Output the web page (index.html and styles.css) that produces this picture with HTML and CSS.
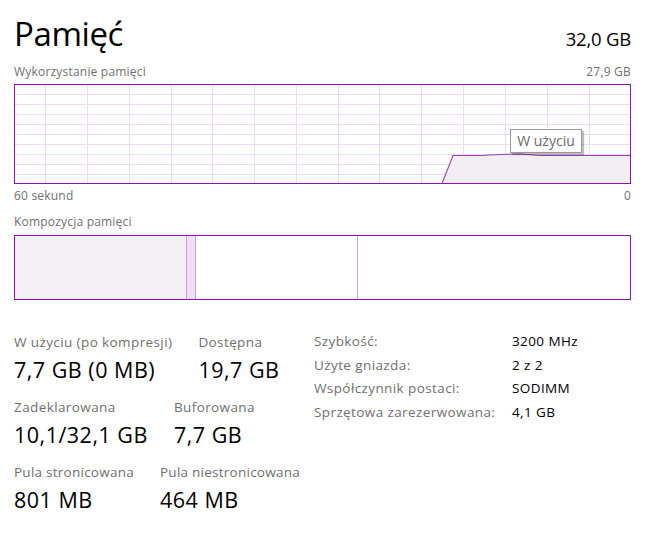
FILE: index.html
```html
<!DOCTYPE html>
<html lang="pl">
<head>
<meta charset="utf-8">
<title>Pamięć</title>
<link rel="stylesheet" href="styles.css">
</head>
<body>
<div class="page">
  <header class="head">
    <h1 class="title">Pamięć</h1>
    <span class="total">32,0 GB</span>
  </header>

  <div class="caption caption-top">
    <span>Wykorzystanie pamięci</span>
    <span>27,9 GB</span>
  </div>

  <div class="chart">
    <svg class="chart-svg" width="615" height="98" viewBox="0 0 615 98">
      <g class="grid">
        <line x1="30.5" y1="0" x2="30.5" y2="98"/>
        <line x1="72.5" y1="0" x2="72.5" y2="98"/>
        <line x1="114.5" y1="0" x2="114.5" y2="98"/>
        <line x1="156.5" y1="0" x2="156.5" y2="98"/>
        <line x1="197.5" y1="0" x2="197.5" y2="98"/>
        <line x1="239.5" y1="0" x2="239.5" y2="98"/>
        <line x1="281.5" y1="0" x2="281.5" y2="98"/>
        <line x1="323.5" y1="0" x2="323.5" y2="98"/>
        <line x1="364.5" y1="0" x2="364.5" y2="98"/>
        <line x1="406.5" y1="0" x2="406.5" y2="98"/>
        <line x1="448.5" y1="0" x2="448.5" y2="98"/>
        <line x1="490.5" y1="0" x2="490.5" y2="98"/>
        <line x1="532.5" y1="0" x2="532.5" y2="98"/>
        <line x1="574.5" y1="0" x2="574.5" y2="98"/>
        <line x1="0" y1="9.5" x2="615" y2="9.5"/>
        <line x1="0" y1="19.5" x2="615" y2="19.5"/>
        <line x1="0" y1="29.5" x2="615" y2="29.5"/>
        <line x1="0" y1="39.5" x2="615" y2="39.5"/>
        <line x1="0" y1="49.5" x2="615" y2="49.5"/>
        <line x1="0" y1="59.5" x2="615" y2="59.5"/>
        <line x1="0" y1="69.5" x2="615" y2="69.5"/>
        <line x1="0" y1="79.5" x2="615" y2="79.5"/>
        <line x1="0" y1="89.5" x2="615" y2="89.5"/>
      </g>
      <polygon class="area" points="427,98 438,70.5 465,70.5 485,69.5 505,69 525,70.5 615,70.5 615,98"/>
      <polyline class="area-line" points="427,98.5 438,70.5 465,70.5 485,69.5 505,69 525,70.5 615,70.5"/>
    </svg>
    <div class="tooltip">W użyciu</div>
  </div>

  <div class="caption caption-axis">
    <span>60 sekund</span>
    <span>0</span>
  </div>

  <div class="caption caption-comp">
    <span>Kompozycja pamięci</span>
  </div>

  <div class="comp">
    <div class="seg seg-used"></div>
    <div class="seg seg-modified"></div>
    <div class="seg seg-standby"></div>
    <div class="seg seg-free"></div>
  </div>

  <section class="stats">
    <div class="stats-main">
      <div class="stat-row">
        <div class="stat">
          <div class="stat-label">W użyciu (po kompresji)</div>
          <div class="stat-value">7,7 GB (0 MB)</div>
        </div>
        <div class="stat">
          <div class="stat-label">Dostępna</div>
          <div class="stat-value">19,7 GB</div>
        </div>
      </div>
      <div class="stat-row">
        <div class="stat">
          <div class="stat-label">Zadeklarowana</div>
          <div class="stat-value">10,1/32,1 GB</div>
        </div>
        <div class="stat">
          <div class="stat-label">Buforowana</div>
          <div class="stat-value">7,7 GB</div>
        </div>
      </div>
      <div class="stat-row stat-row-last">
        <div class="stat">
          <div class="stat-label">Pula stronicowana</div>
          <div class="stat-value">801 MB</div>
        </div>
        <div class="stat">
          <div class="stat-label">Pula niestronicowana</div>
          <div class="stat-value">464 MB</div>
        </div>
      </div>
    </div>
    <dl class="props">
      <dt>Szybkość:</dt><dd>3200 MHz</dd>
      <dt>Użyte gniazda:</dt><dd>2 z 2</dd>
      <dt>Współczynnik postaci:</dt><dd>SODIMM</dd>
      <dt>Sprzętowa zarezerwowana:</dt><dd>4,1 GB</dd>
    </dl>
  </section>
</div>
</body>
</html>
```

FILE: styles.css
```css
html, body {
  margin: 0;
  padding: 0;
  background: #ffffff;
}

body {
  font-family: "Open Sans", "Noto Sans", "DejaVu Sans", sans-serif;
  color: #000000;
}

.page {
  width: 617px;
  padding: 12px 0 0 14px;
}

.head {
  display: flex;
  justify-content: space-between;
  align-items: baseline;
  height: 44px;
}

.title {
  margin: 0;
  font-size: 33px;
  font-weight: 400;
  line-height: 44px;
  letter-spacing: -0.4px;
}

.total {
  font-size: 18.5px;
  line-height: 28px;
  letter-spacing: -0.2px;
}

.caption {
  display: flex;
  justify-content: space-between;
  font-size: 12px;
  line-height: 16px;
  letter-spacing: 0.2px;
  color: #707070;
}

.caption-top {
  margin-top: 8px;
}

.caption-axis {
  margin-top: 4px;
}

.caption-comp {
  margin-top: 10px;
}

.chart {
  position: relative;
  margin-top: 4px;
  height: 98px;
  border: 1px solid #8b12ae;
}

.chart-svg {
  display: block;
}

.grid line {
  stroke: #eddcf2;
  stroke-width: 1;
}

.area {
  fill: #f2eff4;
}

.area-line {
  fill: none;
  stroke: #9b3bb8;
  stroke-width: 1.1;
}

.tooltip {
  position: absolute;
  left: 495px;
  top: 44px;
  width: 70px;
  height: 22px;
  border: 1px solid #9a9a9a;
  background: #ffffff;
  box-shadow: 2px 2px 1px rgba(0, 0, 0, 0.25);
  font-size: 14px;
  line-height: 22px;
  color: #6b6b6b;
  text-align: center;
}

.comp {
  display: flex;
  margin-top: 5px;
  height: 63px;
  border: 1px solid #8b12ae;
}

.seg {
  height: 100%;
}

.seg-used {
  width: 171px;
  background: #f3f0f4;
  border-right: 1px solid #cc9edb;
}

.seg-modified {
  width: 8px;
  background: #eee0f2;
  border-right: 1px solid #cc9edb;
}

.seg-standby {
  width: 161px;
  background: #ffffff;
  border-right: 1px solid #cfa6dc;
}

.seg-free {
  flex: 1;
  background: #ffffff;
}

.stats {
  display: flex;
  align-items: flex-start;
  margin-top: 33px;
}

.stats-main {
  width: 300px;
  display: flex;
  flex-direction: column;
  gap: 14px;
}

.stat-row {
  display: flex;
  gap: 26px;
}

.stat-label {
  font-size: 13.5px;
  line-height: 18px;
  letter-spacing: 0.4px;
  color: #707070;
  margin-bottom: 5px;
  white-space: nowrap;
}

.stat-row-last .stat-label {
  letter-spacing: 0.25px;
}

.stat-value {
  font-size: 21.5px;
  line-height: 28px;
  letter-spacing: 0.5px;
  white-space: nowrap;
}

.props {
  display: grid;
  grid-template-columns: 198px auto;
  margin: -3px 0 0 0;
  font-size: 13.5px;
  line-height: 23.5px;
  letter-spacing: 0.4px;
}

.props dt {
  color: #707070;
  white-space: nowrap;
}

.props dd {
  margin: 0;
  color: #000000;
  white-space: nowrap;
}
```
